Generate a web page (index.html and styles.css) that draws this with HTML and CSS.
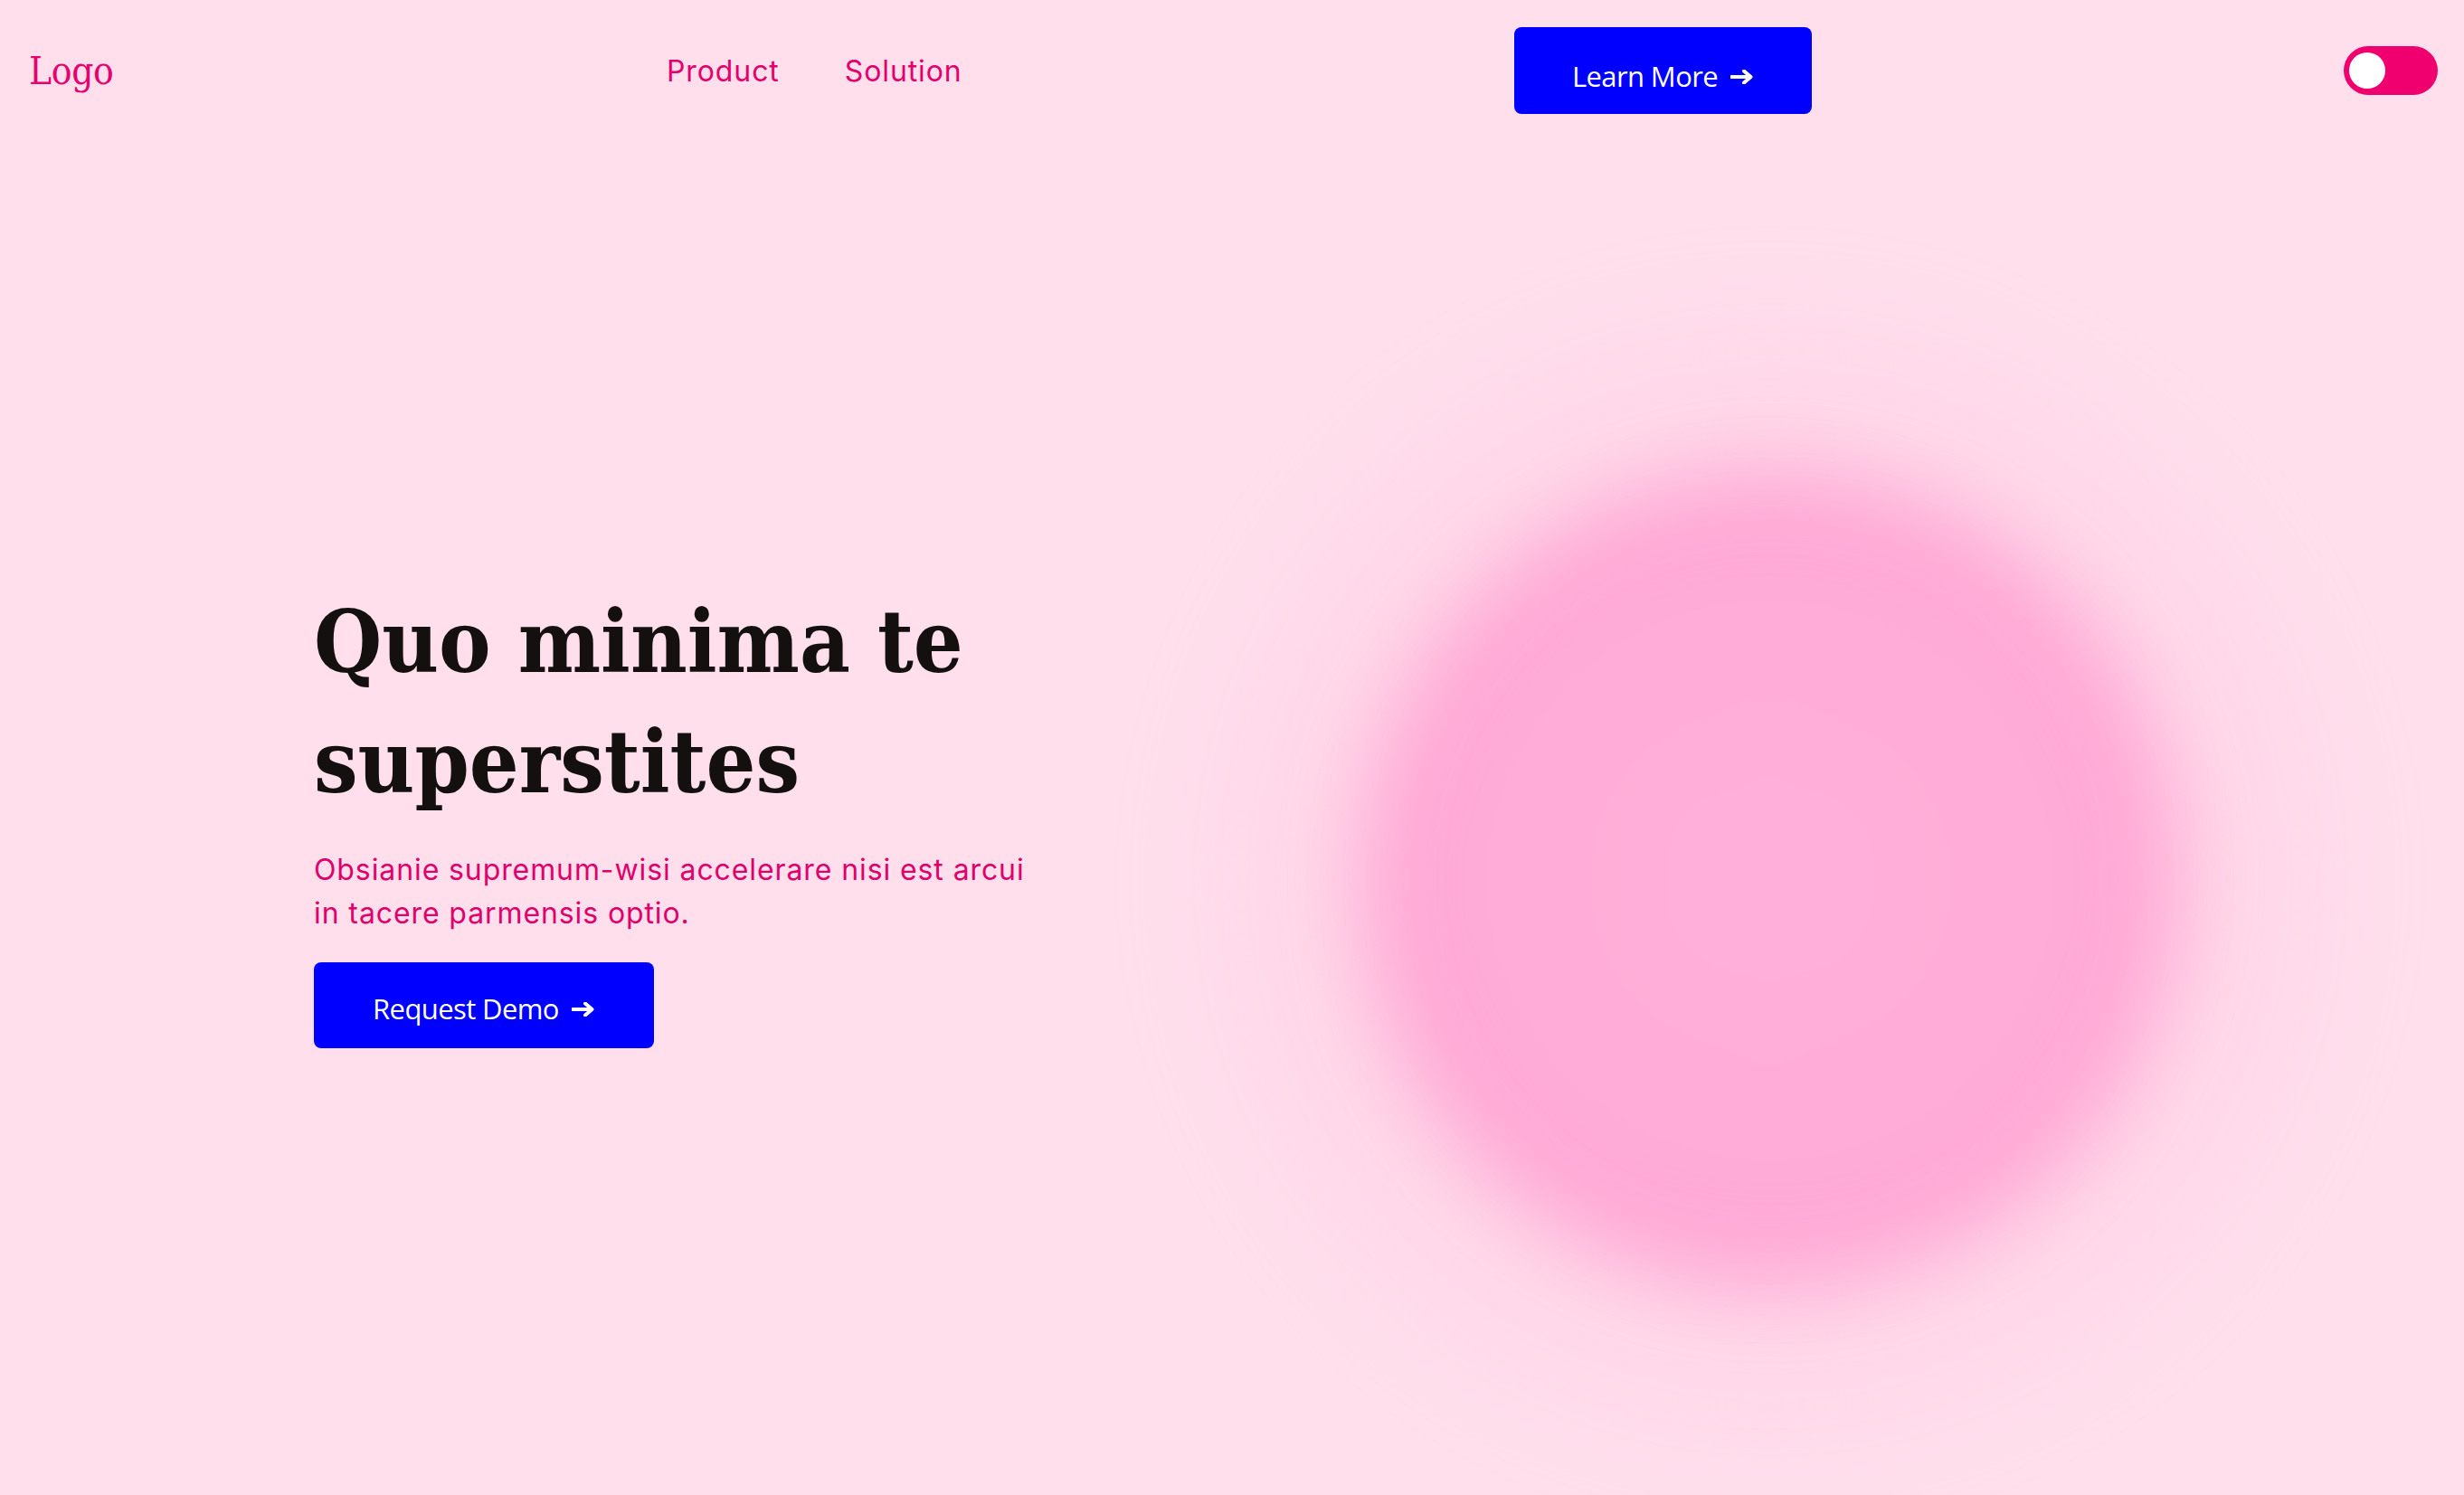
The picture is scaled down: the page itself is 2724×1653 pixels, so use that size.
FILE: index.html
```html
<!DOCTYPE html>
<html lang="en">
<head>
<meta charset="utf-8">
<title>Landing</title>
<link rel="stylesheet" href="styles.css">
</head>
<body>
<div class="page">
  <header class="topbar">
    <a class="logo" href="#">Logo</a>
    <nav class="nav">
      <a href="#">Product</a>
      <a href="#">Solution</a>
    </nav>
    <div class="cta-wrap">
      <a class="btn btn-top" href="#">Learn More
        <svg class="arrow" viewBox="0 0 26 16" width="26" height="16"><path d="M1 8H22M15 1.5L22.5 8L15 14.5" fill="none" stroke="currentColor" stroke-width="4" stroke-linecap="round" stroke-linejoin="round"/></svg>
      </a>
    </div>
    <button class="toggle" aria-label="Toggle theme"><span class="knob"></span></button>
  </header>
  <main class="hero">
    <div class="hero-text">
      <h1>Quo minima te superstites</h1>
      <p>Obsianie supremum-wisi accelerare nisi est arcui in tacere parmensis optio.</p>
      <a class="btn btn-hero" href="#">Request Demo
        <svg class="arrow" viewBox="0 0 26 16" width="26" height="16"><path d="M1 8H22M15 1.5L22.5 8L15 14.5" fill="none" stroke="currentColor" stroke-width="4" stroke-linecap="round" stroke-linejoin="round"/></svg>
      </a>
    </div>
    <div class="hero-art">
      <div class="halo"></div>
      <div class="blob"></div>
    </div>
  </main>
</div>
</body>
</html>
```
FILE: styles.css
```css
* { box-sizing: border-box; }
html, body { margin: 0; padding: 0; }
body {
  background: #ffdfec;
  font-family: "Inter", "Noto Sans", sans-serif;
  overflow: hidden;
}
.page {
  width: 2724px;
  height: 1653px;
  position: relative;
  overflow: hidden;
}
a { text-decoration: none; }

.topbar {
  display: grid;
  grid-template-columns: 705px 937px 1fr auto;
  align-items: center;
  padding: 30px 29px 0 32px;
  height: 126px;
}
.logo {
  font-family: "DejaVu Serif", "Liberation Serif", serif;
  font-stretch: condensed;
  font-size: 42px;
  color: #e8006e;
  letter-spacing: -0.3px;
}
.nav {
  display: flex;
  gap: 72px;
}
.nav a {
  font-size: 32px;
  color: #e4006c;
  letter-spacing: 0.9px;
}
.btn {
  display: inline-flex;
  align-items: center;
  justify-content: center;
  gap: 14px;
  background: #0000ff;
  color: #ffffff;
  font-family: "Open Sans", "Noto Sans", sans-serif;
  font-size: 31px;
  border-radius: 8px;
  letter-spacing: -0.6px;
}
.btn-top {
  width: 329px;
  height: 96px;
  padding-top: 12px;
}
.arrow { display: block; flex: none; margin-top: 2px; }
.toggle {
  width: 104px;
  height: 54px;
  border: none;
  border-radius: 27px;
  background: #f0006f;
  padding: 0 6px;
  display: flex;
  align-items: center;
  margin-top: 0;
}
.knob {
  width: 40px;
  height: 40px;
  border-radius: 50%;
  background: #ffffff;
}

.hero {
  display: grid;
  grid-template-columns: 830px 1fr;
  padding-left: 347px;
}
.hero-text {
  padding-top: 517px;
  position: relative;
  z-index: 2;
}
h1 {
  margin: 0;
  font-family: "DejaVu Serif", "Liberation Serif", serif;
  font-stretch: condensed;
  font-weight: 700;
  font-size: 96px;
  line-height: 133px;
  color: #141010;
  width: 800px;
}
.hero-text p {
  margin: 29px 0 0;
  font-size: 32px;
  line-height: 48px;
  color: #e0006b;
  letter-spacing: 0.9px;
  width: 810px;
}
.btn-hero {
  margin-top: 30px;
  width: 376px;
  height: 95px;
  padding-top: 6px;
}

.hero-art {
  position: relative;
}
.halo, .blob {
  position: fixed;
  border-radius: 50%;
}
.halo {
  left: 1957px;
  top: 973px;
  width: 1300px;
  height: 1300px;
  margin: -650px 0 0 -650px;
  background: radial-gradient(circle, rgba(255,190,220,0.55) 0%, rgba(255,200,226,0.35) 55%, rgba(255,223,236,0) 75%);
  filter: blur(40px);
}
.blob {
  left: 1957px;
  top: 973px;
  width: 900px;
  height: 900px;
  margin: -450px 0 0 -450px;
  background: radial-gradient(circle, #ffb0d9 0%, #ffacd8 50%, #ffa2d0 80%, #ffa6d2 100%);
  filter: blur(45px);
}
```
